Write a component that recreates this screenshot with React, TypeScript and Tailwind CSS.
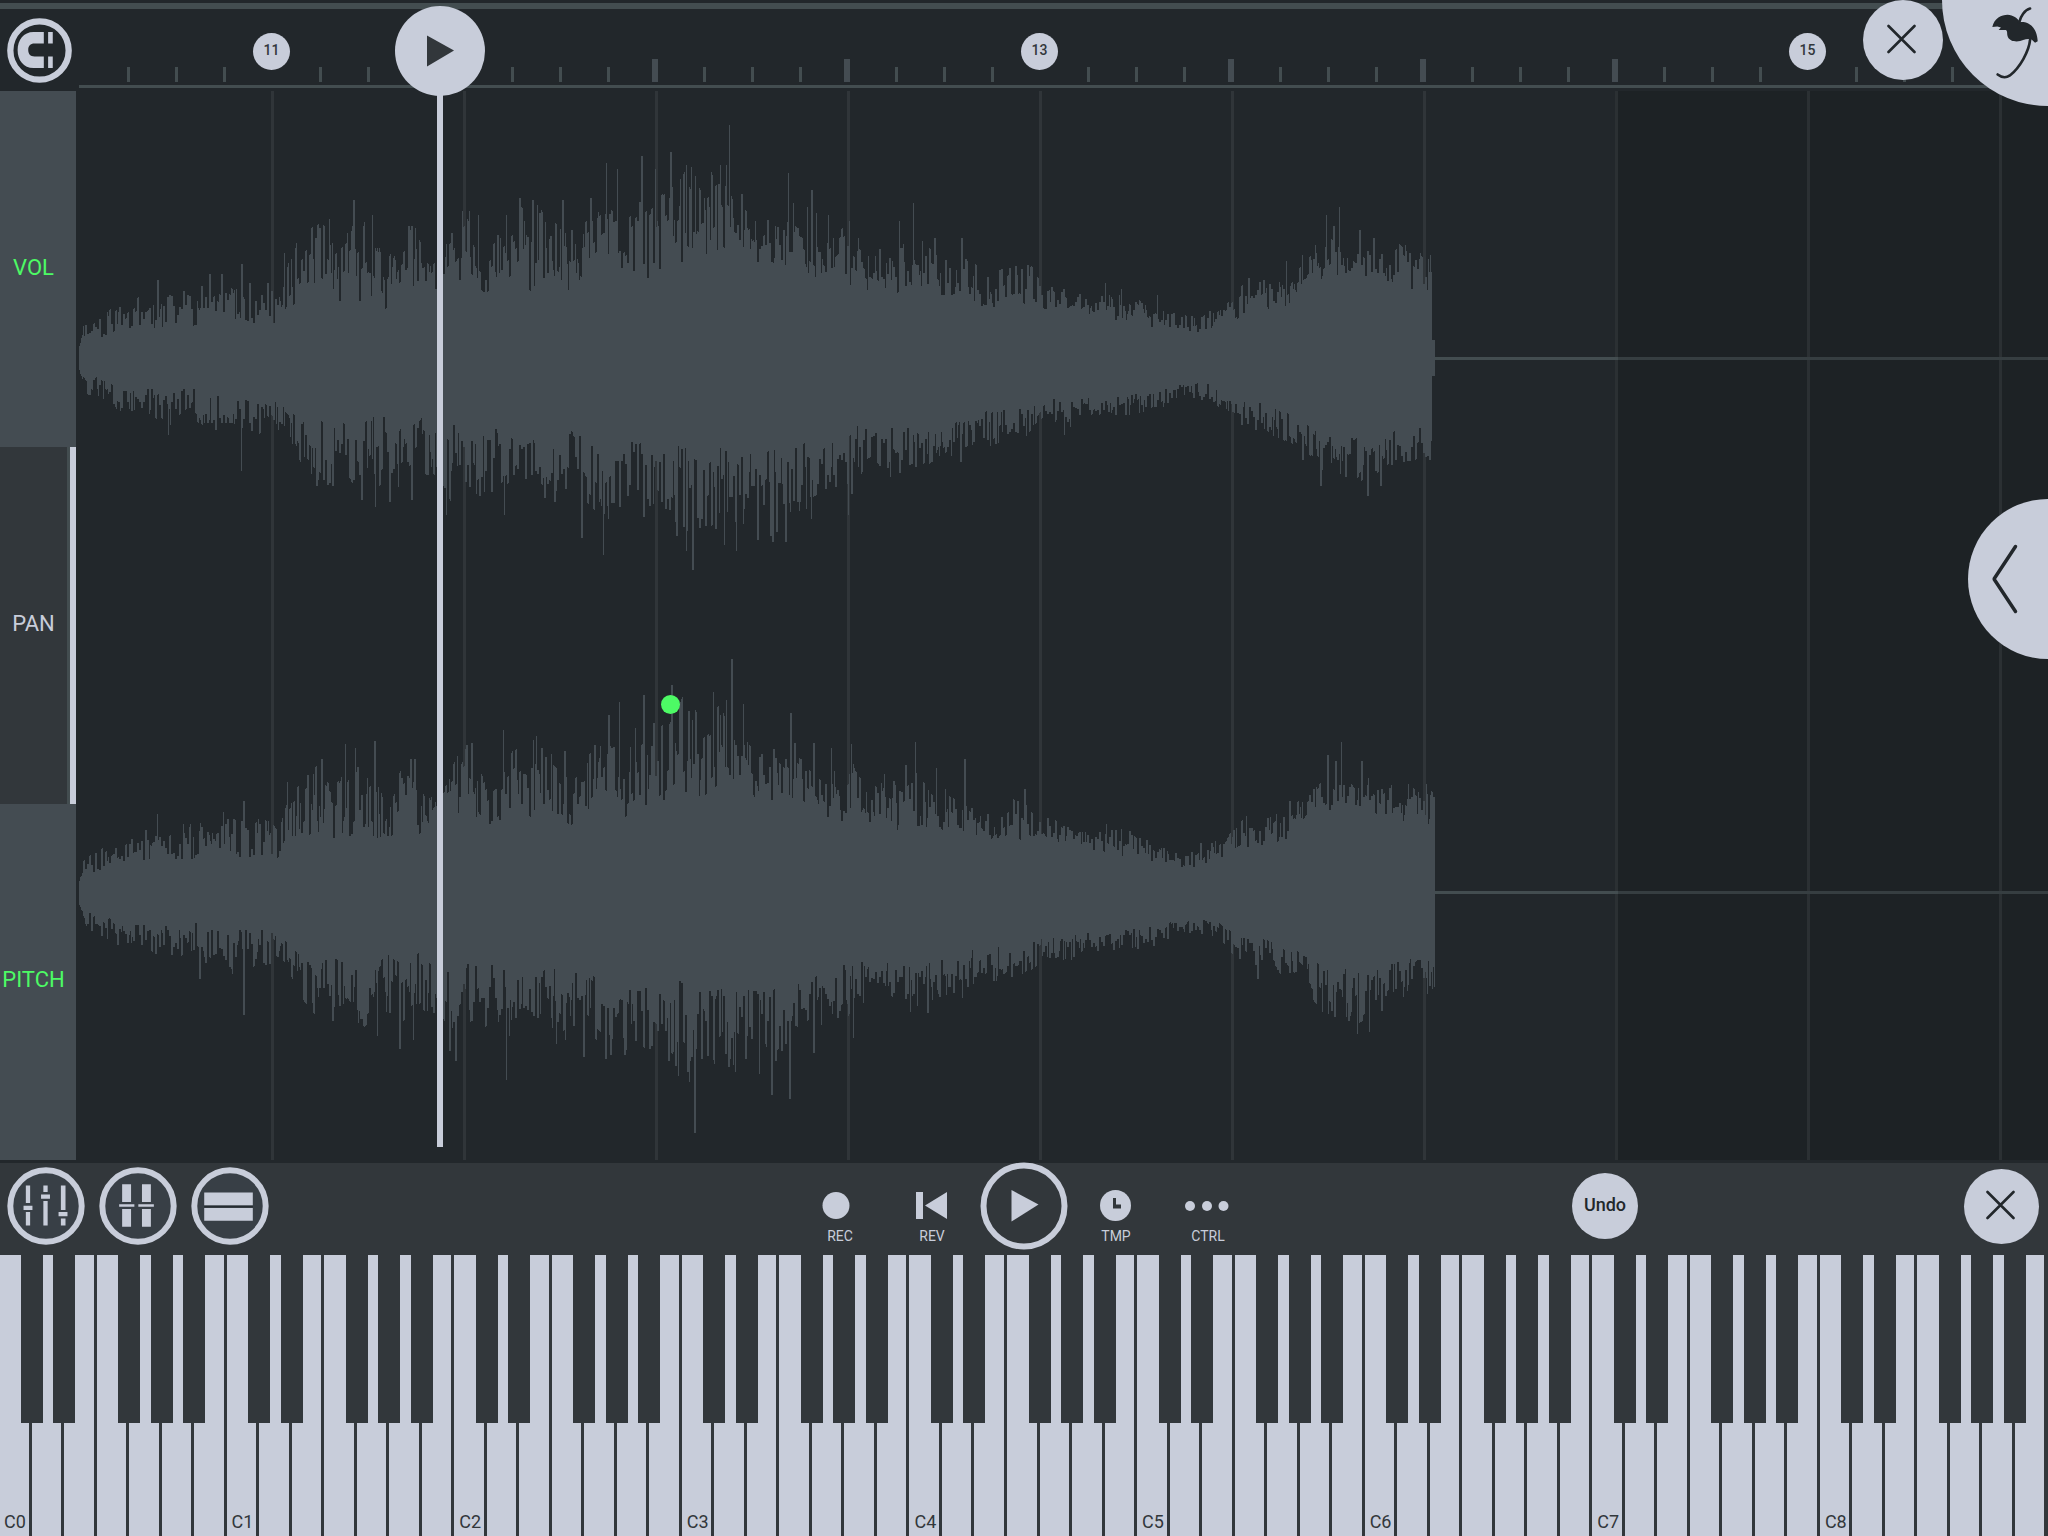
import type { ReactNode } from 'react'

type Point = [x: number, low: number, high: number]
type Spike = [x: number, height: number]

const BEAT = 192
const CLIP_START = 79
const CLIP_LENGTH = 1356

// clip envelope above and below the centre line: position, quietest, loudest
const upper: Point[] = [
  [79, 12, 14], [83, 22, 35], [97, 20, 42], [121, 31, 50], [145, 30, 60], [169, 34, 60], [193, 33, 70], [217, 40, 72],
  [241, 38, 70], [265, 37, 72], [280, 38, 65], [289, 55, 95], [303, 60, 115], [320, 65, 130], [335, 58, 105],
  [352, 60, 128], [370, 65, 140], [384, 52, 85], [400, 62, 120], [412, 60, 130], [430, 68, 95], [445, 78, 110],
  [465, 85, 145], [482, 65, 110], [500, 75, 120], [520, 80, 145], [530, 72, 140], [550, 85, 140], [570, 70, 120],
  [585, 85, 130], [605, 100, 145], [620, 80, 140], [645, 85, 150], [665, 85, 160], [685, 100, 190], [700, 100, 165],
  [720, 115, 185], [735, 110, 150], [745, 108, 150], [755, 90, 140], [775, 95, 140], [800, 95, 130], [825, 75, 110],
  [850, 75, 130], [868, 70, 110], [890, 65, 105], [915, 70, 115], [940, 62, 100], [965, 62, 95], [990, 50, 80],
  [1010, 60, 90], [1030, 52, 88], [1050, 48, 72], [1075, 52, 65], [1100, 40, 62], [1130, 38, 60], [1160, 30, 45],
  [1195, 26, 40], [1225, 36, 55], [1245, 45, 72], [1270, 52, 75], [1290, 55, 80], [1310, 75, 100], [1330, 85, 115],
  [1355, 86, 105], [1380, 78, 105], [1400, 76, 112], [1415, 70, 105], [1435, 68, 98],
]

const lower: Point[] = [
  [79, 12, 14], [87, 22, 35], [97, 20, 38], [121, 33, 52], [145, 30, 52], [169, 36, 65], [193, 32, 60], [217, 38, 72],
  [241, 38, 75], [265, 38, 70], [285, 50, 70], [300, 65, 100], [320, 65, 125], [345, 70, 120], [365, 70, 135],
  [384, 58, 120], [400, 75, 125], [420, 62, 110], [435, 74, 115], [450, 72, 140], [480, 70, 130], [500, 75, 125],
  [515, 82, 120], [540, 82, 120], [562, 75, 135], [580, 80, 135], [600, 90, 155], [620, 90, 150], [650, 90, 155],
  [680, 95, 165], [690, 98, 170], [720, 95, 160], [740, 95, 165], [760, 95, 160], [780, 88, 150], [800, 86, 148],
  [825, 82, 125], [850, 72, 125], [870, 72, 100], [900, 72, 112], [925, 74, 108], [950, 68, 98], [975, 58, 88],
  [1000, 54, 84], [1025, 54, 78], [1045, 43, 65], [1070, 44, 66], [1100, 40, 56], [1130, 38, 55], [1160, 33, 50],
  [1190, 25, 38], [1215, 28, 44], [1235, 42, 62], [1265, 48, 72], [1300, 62, 88], [1320, 76, 118], [1350, 78, 132],
  [1375, 75, 112], [1400, 70, 102], [1435, 68, 98],
]

const leftUp: Spike[] = [
  [157, 78], [209, 84], [221, 84], [241, 94], [284, 105], [296, 115], [319, 130], [329, 139], [353, 158], [372, 143],
  [408, 132], [411, 132], [462, 147], [469, 147], [478, 143], [506, 143], [519, 160], [532, 158], [537, 153],
  [562, 158], [590, 160], [606, 195], [617, 189], [641, 202], [655, 189], [670, 206], [686, 193], [691, 191],
  [712, 183], [718, 174], [726, 193], [729, 233], [741, 164], [788, 185], [793, 155], [807, 151], [811, 168],
  [816, 145], [828, 143], [849, 137], [899, 137], [913, 155], [934, 120], [961, 120], [1105, 75], [1121, 69],
  [1157, 63], [1248, 80], [1286, 97], [1302, 103], [1315, 113], [1326, 143], [1333, 132], [1339, 151], [1359, 128],
  [1373, 120], [1400, 113], [1405, 113], [1428, 99],
]

const leftDown: Spike[] = [
  [168, 77], [241, 113], [316, 128], [332, 128], [361, 142], [375, 149], [389, 144], [411, 142], [446, 157],
  [479, 138], [504, 157], [544, 140], [554, 144], [581, 180], [603, 197], [608, 161], [676, 178], [686, 193],
  [692, 212], [699, 170], [724, 187], [736, 193], [757, 182], [770, 178], [772, 184], [776, 174], [785, 184],
  [806, 151], [811, 161], [848, 157], [851, 136], [890, 119], [960, 104], [1064, 77], [1302, 102], [1320, 128],
  [1367, 138], [1380, 128],
]

const rightUp: Spike[] = [
  [157, 79], [223, 81], [243, 92], [287, 111], [307, 118], [321, 134], [345, 149], [355, 145], [374, 152],
  [410, 134], [414, 134], [466, 148], [471, 150], [503, 163], [533, 153], [536, 157], [545, 136], [564, 142],
  [594, 148], [608, 178], [619, 191], [635, 165], [643, 198], [653, 170], [671, 208], [688, 182], [692, 173],
  [713, 201], [726, 193], [731, 234], [743, 189], [747, 151], [790, 180], [794, 150], [813, 150], [831, 145],
  [851, 149], [854, 125], [884, 119], [905, 128], [915, 151], [936, 125], [964, 134], [1024, 104], [1106, 69],
  [1200, 50], [1246, 77], [1289, 92], [1327, 138], [1335, 132], [1341, 151], [1361, 132], [1368, 115], [1408, 109],
  [1426, 109],
]

const rightDown: Spike[] = [
  [199, 86], [232, 81], [243, 122], [332, 128], [360, 126], [377, 143], [399, 156], [413, 147], [449, 158],
  [455, 168], [506, 187], [509, 143], [556, 151], [565, 147], [583, 164], [605, 166], [610, 162], [624, 162],
  [652, 153], [668, 168], [678, 183], [689, 189], [694, 240], [728, 174], [735, 179], [745, 166], [759, 181],
  [771, 202], [775, 168], [789, 206], [813, 160], [853, 145], [910, 119], [927, 120], [962, 105], [1257, 86],
  [1334, 124], [1348, 128], [1357, 141], [1369, 139], [1381, 118],
]

function random(seed: number) {
  let s = seed
  return () => {
    s = (s * 1664525 + 1013904223) % 4294967296
    return s / 4294967296
  }
}

function levels(envelope: Point[], spikes: Spike[], seed: number) {
  const next = random(seed)
  const out: number[] = []
  let k = 0
  let held = 0
  for (let i = 0; i < CLIP_LENGTH; i++) {
    const x = CLIP_START + i
    while (k < envelope.length - 2 && envelope[k + 1][0] <= x) k++
    const [x0, l0, h0] = envelope[k]
    const [x1, l1, h1] = envelope[k + 1]
    const t = (x - x0) / (x1 - x0)
    if (i % 2 === 0 || next() > 0.8) held = next() * 1.25 - 0.1
    const low = l0 + (l1 - l0) * t
    const high = h0 + (h1 - h0) * t
    out.push(Math.round(low + (high - low) * held))
  }
  for (const [x, h] of spikes) {
    out[x - CLIP_START] = h
    if (h % 2 === 0) out[x - CLIP_START + 1] = h
  }
  return out
}

function wavePath(up: number[], down: number[]) {
  const mid = 267
  let d = `M0 ${mid}`
  up.forEach((v, i) => (d += `V${mid - v}H${i + 1}`))
  for (let i = down.length - 1; i >= 0; i--) d += `V${mid + down[i]}H${i}`
  return d + 'Z'
}

// the left channel fades out over its last three pixels
const fadeTail = (v: number[]) => v.map((h, i) => (i > CLIP_LENGTH - 4 ? Math.min(h, 18) : h))

const channels = [
  { name: 'Left channel', d: wavePath(fadeTail(levels(upper, leftUp, 11)), fadeTail(levels(lower, leftDown, 29))) },
  { name: 'Right channel', d: wavePath(levels(upper, rightUp, 53), levels(lower, rightDown, 71)) },
]

const ticks = Array.from({ length: 120 }, (_, i) => i)
const beats = Array.from({ length: 30 }, (_, i) => i)
const bars = [
  { tick: 4, label: '11' },
  { tick: 20, label: '13' },
  { tick: 36, label: '15' },
]

function Cross() {
  return (
    <svg viewBox="0 0 32 32" className="size-8" fill="none" stroke="#22272b" strokeWidth="2.6" strokeLinecap="round">
      <path d="M1.5 2L27.500 28M27.500 2L1.5 28" />
    </svg>
  )
}

function Ruler() {
  return (
    <header className="relative z-10 h-[91px] bg-[#22272b] pt-[3px]">
      <div className="h-[6px] bg-[#434d50]" />
      <div className="flex h-[82px]">
        <div className="flex w-[79px] shrink-0 items-center pl-[7px]">
          <button aria-label="Snap">
            <svg viewBox="20 52 196 196" className="size-[65px]">
              <circle cx="118" cy="150" r="88" fill="#22272b" stroke="#c8cdda" strokeWidth="19" />
              <path
                fill="#c8cdda"
                d="M131 94H100C70 94 52 118 52 148.500S70 203 100 203H131V168H103C90 168 84 160 84 148.500S90 129 103 129H131ZM144 94h14v35h-14zM144 168h14v35h-14z"
              />
            </svg>
          </button>
        </div>
        <div className="flex min-w-0 flex-1 flex-col justify-end gap-[3px] overflow-hidden pb-[3px]">
          <div className="flex items-end">
            {ticks.map((i) => (
              <div key={i} className="h-[23px] w-12 shrink-0">
                {i % 4 !== 0 && <div className="mt-2 h-[15px] w-[3px] bg-[#434d50]" />}
                {i % 4 === 0 && i % 16 !== 4 && i > 0 && <div className="-ml-[3px] h-[23px] w-[6px] bg-[#444c52]" />}
              </div>
            ))}
          </div>
          <div className="h-[3px] shrink-0 bg-[#434d50]" />
        </div>
      </div>
      {bars.map((b) => (
        <span
          key={b.label}
          style={{ left: CLIP_START + b.tick * 48 - 18 }}
          className="absolute top-[33px] flex size-[37px] items-center justify-center rounded-full bg-[#c8cdda] pb-[3px] text-[14px] leading-4 font-medium text-[#32373b]"
        >
          {b.label}
        </span>
      ))}
      <button
        aria-label="Playhead"
        className="absolute top-[6px] left-[395px] flex size-[90px] items-center justify-center rounded-full bg-[#c8cdda]"
      >
        <svg viewBox="0 0 28 32" className="h-8 w-7" fill="#32373b">
          <path d="M1 0.500L28 15.500L1 31.500Z" />
        </svg>
      </button>
      <button
        aria-label="Close editor"
        className="absolute top-0 right-[105px] flex size-20 items-center justify-center rounded-full bg-[#c8cdda]"
      >
        <Cross />
      </button>
      <button aria-label="Menu" className="absolute top-0 right-0 size-[106px] rounded-bl-full bg-[#c8cdda]">
        <svg viewBox="450 10 160 240" className="absolute top-[3px] right-[5px] h-20 w-[53px]">
          <path
            fill="#22272b"
            d="M457 82C463 55 485 45 503 45C520 46 533 55 540 67C562 64 592 78 594 125L586 129L578 122C574 116 560 117 550 121C538 127 512 129 504 112C500 103 504 95 498 91L476 91L483 83L472 80Z"
          />
          <path
            fill="none"
            stroke="#22272b"
            strokeWidth="8"
            strokeLinecap="round"
            d="M538 68C542 50 555 30 571 26M571 120C568 155 540 205 510 228C497 237 482 232 473 225"
          />
        </svg>
      </button>
    </header>
  )
}

function Envelopes() {
  return (
    <nav className="grid w-[76px] shrink-0 grid-rows-3 bg-[#444c52] text-[22px]">
      <button className="pr-[9px] pb-1 text-[#4dfa65]">VOL</button>
      <button className="flex items-stretch text-[#c8cdda]">
        <span className="flex flex-1 items-center justify-center bg-[#32373b] pb-1">PAN</span>
        <span className="w-[3px] bg-[#434d50]" />
        <span className="w-[6px] bg-[#c8cdda]" />
      </button>
      <button className="pr-[9px] pb-1 text-[#4dfa65]">PITCH</button>
    </nav>
  )
}

function Editor() {
  return (
    <section className="relative min-w-0 flex-1 overflow-hidden">
      <div className="absolute inset-y-0 left-[3px] flex">
        {beats.map((i) => (
          <div
            key={i}
            style={{ width: BEAT }}
            className={
              i === 0 ? 'shrink-0' : i < 8 ? 'shrink-0 border-l-3 border-[#303539]' : 'shrink-0 border-l-3 border-[#2b3033] bg-[#1d2225]'
            }
          />
        ))}
      </div>
      <div className="relative flex h-full flex-col">
        {channels.map((c) => (
          <div key={c.name} className="relative flex flex-1 items-center pl-[3px]">
            <div className="h-[3px] w-[1539px] shrink-0 bg-[#434d50]" />
            <div className="h-[3px] flex-1 bg-[#363e41]" />
            <svg
              role="img"
              aria-label={c.name}
              viewBox="0 0 1356 534"
              preserveAspectRatio="none"
              shapeRendering="crispEdges"
              className="absolute top-0 left-[3px] h-full w-[1356px]"
            >
              <path d={c.d} fill="#444c52" />
            </svg>
          </div>
        ))}
      </div>
      <span className="absolute top-[604px] left-[585px] size-[19px] rounded-full bg-[#4dfa65]" />
      <span className="absolute top-0 bottom-[13px] left-[361px] w-[6px] bg-[#c8cdda]" />
      <button
        aria-label="Open panel"
        className="absolute top-[408px] right-0 h-40 w-20 rounded-l-full bg-[#c8cdda]"
      >
        <svg viewBox="0 0 26 70" className="ml-6 h-[70px] w-[26px]" fill="none" stroke="#22272b" strokeWidth="3.5" strokeLinecap="round">
          <path d="M23.500 2.500L2 35L23.500 67.500" strokeLinejoin="bevel" />
        </svg>
      </button>
    </section>
  )
}

function RoundIcon({ label, children }: { label: string; children: ReactNode }) {
  return (
    <button aria-label={label}>
      <svg viewBox="0 0 236 236" className="size-[78px]" fill="#c8cdda">
        <circle cx="118" cy="118" r="108" fill="#383f46" stroke="#c8cdda" strokeWidth="18" />
        {children}
      </svg>
    </button>
  )
}

function TransportButton({ label, children }: { label: string; children: ReactNode }) {
  return (
    <button className="flex h-full w-[92px] flex-col items-center pt-[26px] text-[14px] leading-4 text-[#c8cdda]">
      <svg viewBox="0 0 48 34" className="mb-[5px] h-[34px] w-12 shrink-0" fill="#c8cdda">
        {children}
      </svg>
      {label}
    </button>
  )
}

function Transport() {
  return (
    <div className="border-t-3 border-[#22272b] bg-[#32373b] pb-[6px]">
      <div className="grid h-[86px] grid-cols-[1fr_auto_1fr] items-center">
        <div className="flex gap-[14px] pl-[7px]">
          <RoundIcon label="Mixer">
            <path d="M57 56h13v53H57zM57 136h13v41H57zM50 117h27v13H50zM110 56h13v20h-13zM110 103h13v74h-13zM103 83h27v13h-27zM163 56h14v74h-14zM163 156h14v21h-14zM156 136h27v13h-27z" />
          </RoundIcon>
          <RoundIcon label="Rack">
            <path d="M70 52h27v54H70zM70 127h27v54H70zM130 52h27v54h-27zM130 127h27v54h-27zM61 113h46v7H61zM119 113h47v7h-47z" />
          </RoundIcon>
          <RoundIcon label="Keyboard">
            <path d="M40 77h147v39H40zM40 124h147v39H40z" />
            <path d="M40 118h147v4H40z" fill="#252c31" />
          </RoundIcon>
        </div>
        <div className="flex h-[86px] items-center">
          <TransportButton label="REC">
            <circle cx="20" cy="16.500" r="13.500" />
          </TransportButton>
          <TransportButton label="REV">
            <path d="M8 3h7v27H8zM39 3v27L17 16.500z" />
          </TransportButton>
          <button aria-label="Play" className="flex h-[86px] w-[92px] items-center justify-center">
            <svg viewBox="0 0 88 88" className="size-[88px] shrink-0" fill="#c8cdda">
              <circle cx="44" cy="44" r="40.500" fill="none" stroke="#c8cdda" strokeWidth="6" />
              <path d="M31.500 28L58.500 42.500L31.500 59.500Z" />
            </svg>
          </button>
          <TransportButton label="TMP">
            <circle cx="23.500" cy="16.500" r="15.500" />
            <path d="M21 9h3v6.500h5v4h-8z" fill="#32373b" />
          </TransportButton>
          <TransportButton label="CTRL">
            <circle cx="6" cy="17" r="5" />
            <circle cx="23" cy="17" r="5" />
            <circle cx="39.500" cy="17" r="5" />
          </TransportButton>
        </div>
        <div className="flex items-center justify-end gap-[326px] pr-[9px]">
          <button className="size-[66px] rounded-full bg-[#c8cdda] pb-[3px] text-[18px] font-medium text-[#22272b]">Undo</button>
          <button aria-label="Close keyboard" className="flex size-[75px] items-center justify-center rounded-full bg-[#c8cdda]">
            <Cross />
          </button>
        </div>
      </div>
    </div>
  )
}

function Piano() {
  const keys = Array.from({ length: 63 }, (_, i) => i)
  return (
    <div className="overflow-hidden bg-[#32373b]">
      <div className="mr-px -ml-px flex h-[281px]">
        {keys.map((i) => {
          const note = i % 7
          return (
            <div key={i} className="relative flex-1">
              <button
                aria-label={'CDEFGAB'[note] + Math.floor(i / 7)}
                className="flex h-full w-full items-end border-r-3 border-[#32373b] bg-[#c8cdda] pb-1 pl-[5px] text-[18px] leading-5 text-[#32373b]"
              >
                {note === 0 && `C${i / 7}`}
              </button>
              {note !== 2 && note !== 6 && (
                <button
                  aria-label={'CDEFGAB'[note] + '#' + Math.floor(i / 7)}
                  className="absolute top-0 -right-[11px] z-10 h-[168px] w-[22px] bg-[#32373b]"
                />
              )}
            </div>
          )
        })}
      </div>
    </div>
  )
}

export default function App() {
  return (
    <div className="flex min-h-screen flex-col bg-[#22272b] font-[Roboto,sans-serif]">
      <Ruler />
      <main className="flex min-h-[800px] flex-1">
        <Envelopes />
        <Editor />
      </main>
      <Transport />
      <Piano />
    </div>
  )
}
